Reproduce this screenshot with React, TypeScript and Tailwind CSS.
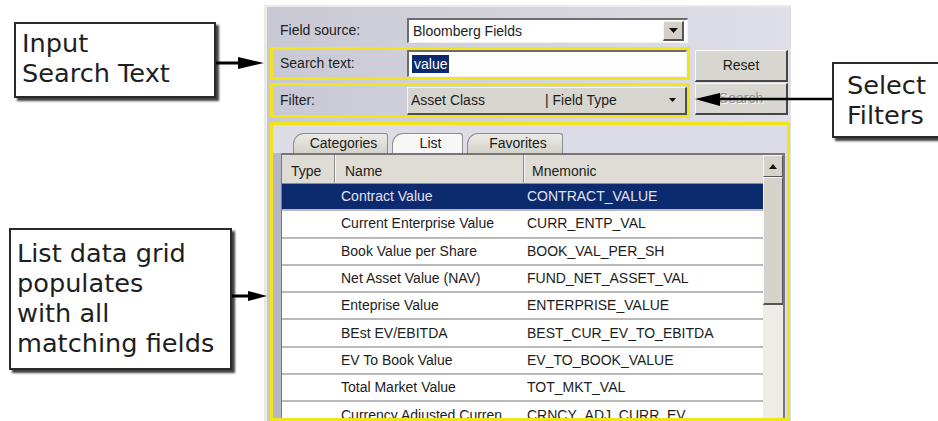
import React from "react";

const rows: [string, string][] = [
  ["Contract Value", "CONTRACT_VALUE"],
  ["Current Enterprise Value", "CURR_ENTP_VAL"],
  ["Book Value per Share", "BOOK_VAL_PER_SH"],
  ["Net Asset Value (NAV)", "FUND_NET_ASSET_VAL"],
  ["Enteprise Value", "ENTERPRISE_VALUE"],
  ["BEst EV/EBITDA", "BEST_CUR_EV_TO_EBITDA"],
  ["EV To Book Value", "EV_TO_BOOK_VALUE"],
  ["Total Market Value", "TOT_MKT_VAL"],
  ["Currency Adjusted Curren", "CRNCY_ADJ_CURR_EV"],
  ["Currency Adjusted Market", "CRNCY_ADJ_MKT_CAP"],
];

function Callout({ lines, className }: { lines: string[]; className: string }) {
  return (
    <div
      className={`shrink-0 bg-white border-2 border-[#2a2a2a] shadow-[3px_3px_2px_rgba(0,0,0,0.75)] font-['DejaVu_Sans',sans-serif] text-[25.6px] leading-[30px] text-[#1e1e1e] ${className}`}
    >
      {lines.map((l) => (
        <div key={l} className="whitespace-nowrap">
          {l}
        </div>
      ))}
    </div>
  );
}

function DownTriangle() {
  return (
    <svg width="9" height="5" viewBox="0 0 9 5">
      <polygon points="0,0 9,0 4.5,5" fill="#111" />
    </svg>
  );
}

function Tab({ label, active, className }: { label: string; active?: boolean; className: string }) {
  return (
    <div
      className={`h-[20px] flex items-center justify-center pl-[6px] border border-b-0 border-[#8e8e8e] rounded-tl-[11px] rounded-tr-[3px] ${
        active ? "bg-[#f7f7f5]" : "bg-linear-to-b from-[#ecebe6] to-[#d2d1ca]"
      } ${className}`}
    >
      {label}
    </div>
  );
}

export default function App() {
  return (
    <div className="relative w-[938px] h-[421px] bg-white overflow-hidden flex">
      {/* left notes */}
      <div className="w-[264px] shrink-0 flex flex-col">
        <Callout lines={["Input", "Search Text"]} className="mt-[22px] ml-[14px] w-[202px] h-[76px] pt-[4px] pl-[6px]" />
        <Callout
          lines={["List data grid", "populates", "with all", "matching fields"]}
          className="mt-[130px] ml-[9px] w-[223px] h-[142px] pt-[8px] pl-[6px]"
        />
      </div>

      {/* field search dialog */}
      <div className="mt-[5px] w-[527px] h-[416px] shrink-0 flex flex-col border-l-[3px] border-t-2 border-[#ebebe6] bg-linear-to-r from-[#c9c9d5] to-[#dfdfe7] font-['Liberation_Sans',Arial,sans-serif] text-[14px] text-[#1c1c1c]">
        {/* field source */}
        <div className="mt-[11px] flex items-center h-[25px] shrink-0">
          <div className="pl-[13px] w-[140px]">Field source:</div>
          <div className="w-[281px] h-[25px] bg-white border-t-2 border-l-2 border-t-[#6c6c6c] border-l-[#6c6c6c] border-r border-b border-r-[#f2f2f2] border-b-[#f2f2f2] flex items-center">
            <span className="pl-[4px] flex-1">Bloomberg Fields</span>
            <div className="w-[21px] h-[20px] mr-[3px] bg-[#d4d0c8] border-t border-l border-[#f4f4f4] border-r-2 border-b-2 border-r-[#555] border-b-[#555] flex items-center justify-center">
              <DownTriangle />
            </div>
          </div>
        </div>

        {/* search text + filter */}
        <div className="mt-[4px] flex shrink-0">
          <div className="ml-[3px] w-[420px] flex flex-col gap-[3px]">
            <div className="h-[33px] border-[3px] border-[#f3e41a] flex items-center">
              <div className="pl-[7px] w-[134px]">Search text:</div>
              <div className="w-[280px] h-[27px] bg-white border-t-2 border-l-2 border-t-[#6c6c6c] border-l-[#6c6c6c] border-r border-b border-r-[#f2f2f2] border-b-[#f2f2f2] flex items-center pl-[3px]">
                <span className="bg-[#0c2a6e] text-white px-[2px] leading-[18px]">value</span>
              </div>
            </div>
            <div className="h-[35px] border-[3px] border-[#f3e41a] flex items-center">
              <div className="pl-[7px] w-[134px]">Filter:</div>
              <div className="w-[280px] h-[28px] bg-[#d7d5cf] border-t border-l border-[#f4f4f4] border-r-2 border-b-2 border-r-[#4e4e4e] border-b-[#4e4e4e] flex items-center">
                <span className="pl-[3px] w-[137px]">Asset Class</span>
                <span className="flex-1">| Field Type</span>
                <span className="mr-[9px] flex">
                  <svg width="7" height="4" viewBox="0 0 7 4">
                    <polygon points="0,0 7,0 3.5,4" fill="#111" />
                  </svg>
                </span>
              </div>
            </div>
          </div>
          <div className="ml-[5px] pt-[3px] flex flex-col gap-[1px]">
            <div className="w-[93px] h-[32px] bg-[#d8d6d0] border-t border-l border-[#f6f6f6] border-r-2 border-b-2 border-r-[#454545] border-b-[#454545] flex items-center justify-center">
              Reset
            </div>
            <div className="w-[93px] h-[32px] bg-[#d8d6d0] border-t border-l border-[#f6f6f6] border-r-2 border-b-2 border-r-[#454545] border-b-[#454545] flex items-center justify-center text-[#8d8d8d] [text-shadow:1px_1px_0_#fff]">
              Search
            </div>
          </div>
        </div>

        {/* tabs + list grid */}
        <div className="mt-[4px] ml-[3px] w-[520px] flex-1 min-h-0 border-[3px] border-[#f3e41a] bg-[#dcdce6] flex flex-col overflow-hidden">
          <div className="mt-[8px] h-[20px] pl-[20px] flex gap-[4px] shrink-0">
            <Tab label="Categories" className="w-[95px]" />
            <Tab label="List" active className="w-[71px]" />
            <Tab label="Favorites" className="w-[96px]" />
          </div>
          <div className="flex flex-1 min-h-0">
            <div className="w-[8px] bg-[#b7b7c8]" />
            <div className="w-[504px] border-l border-t-2 border-r-2 border-[#777] bg-white flex overflow-hidden">
              <div className="w-[481px] flex flex-col">
                <div className="h-[29px] shrink-0 flex bg-[#dedcd4] border-b border-[#8a8a8a]">
                  <div className="w-[53px] pl-[9px] flex items-center pt-[4px] border-r border-[#8a8a8a]">Type</div>
                  <div className="w-[189px] pl-[9px] flex items-center pt-[4px] border-l border-[#f8f8f8] border-r border-r-[#8a8a8a]">Name</div>
                  <div className="flex-1 pl-[7px] flex items-center pt-[4px] border-l border-[#f8f8f8]">Mnemonic</div>
                </div>
                {rows.map(([name, mnem], i) => (
                  <div
                    key={mnem}
                    className={`h-[27.3px] shrink-0 flex items-center border-b-2 border-[#b9b9b9] ${
                      i === 0 ? "bg-[#0c2a6e] text-[#e2e2f2]" : ""
                    }`}
                  >
                    <div className="w-[53px]" />
                    <div className="w-[189px] pl-[6px] whitespace-nowrap overflow-hidden">{name}</div>
                    <div className="flex-1 pl-[3px] whitespace-nowrap overflow-hidden">{mnem}</div>
                  </div>
                ))}
              </div>
              {/* scrollbar */}
              <div className="w-[20px] flex flex-col bg-[#edece7]">
                <div className="h-[22px] bg-[#d6d3cb] border-t border-l border-[#f6f6f6] border-r border-b border-r-[#555] border-b-[#555] flex items-center justify-center">
                  <svg width="8" height="5" viewBox="0 0 8 5">
                    <polygon points="0,5 8,5 4,0" fill="#111" />
                  </svg>
                </div>
                <div className="h-[128px] bg-[#d6d3cb] border-t border-l border-[#f6f6f6] border-r border-b-2 border-r-[#555] border-b-[#555]" />
              </div>
            </div>
          </div>
        </div>
      </div>

      {/* right note */}
      <div className="flex-1 pl-[41px] pt-[62px]">
        <Callout lines={["Select", "Filters"]} className="w-[120px] h-[76px] pt-[6px] pl-[13px]" />
      </div>

      {/* pointer arrows */}
      <svg className="absolute inset-0 pointer-events-none" width="938" height="421" viewBox="0 0 938 421">
        <line x1="216" y1="63" x2="242" y2="63" stroke="#000" strokeWidth="3" />
        <polygon points="238,57 264,63 238,69" fill="#000" />
        <line x1="232" y1="296" x2="252" y2="296" stroke="#000" strokeWidth="3" />
        <polygon points="248,291 267,296 248,301" fill="#000" />
        <line x1="832" y1="99" x2="716" y2="99" stroke="#000" strokeWidth="2.5" />
        <polygon points="720,93 695,99 720,106" fill="#000" />
      </svg>
    </div>
  );
}
